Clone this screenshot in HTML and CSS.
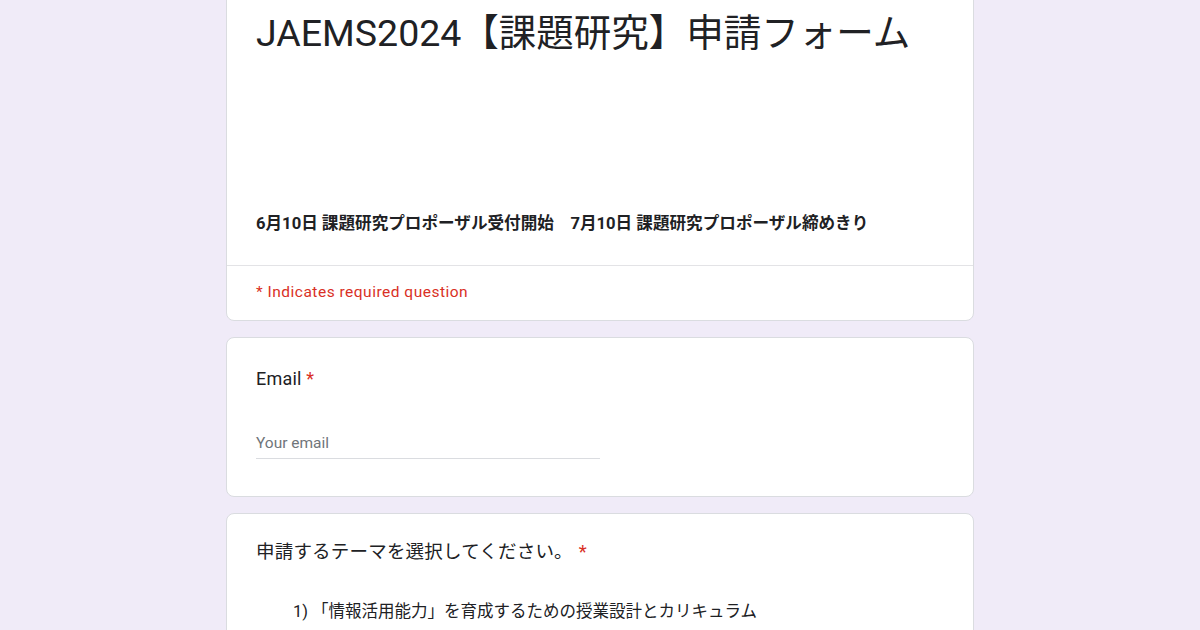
FILE: index.html
```html
<!DOCTYPE html>
<html lang="ja">
<head>
<meta charset="utf-8">
<link rel="stylesheet" href="styles.css">
</head>
<body>
<main class="form">
  <section class="card header-card">
    <div class="header-main">
      <h1 class="title">JAEMS2024【課題研究】申請フォーム</h1>
      <p class="desc">6月10日 課題研究プロポーザル受付開始　7月10日 課題研究プロポーザル締めきり</p>
    </div>
    <div class="required-note">* Indicates required question</div>
  </section>

  <section class="card question-card">
    <div class="q-title">Email <span class="req">*</span></div>
    <div class="input-line">Your email</div>
  </section>

  <section class="card question-card theme-card">
    <div class="q-title jp">申請するテーマを選択してください。<span class="req">*</span></div>
    <div class="option">1) 「情報活用能力」を育成するための授業設計とカリキュラム</div>
  </section>
</main>
</body>
</html>
```
FILE: styles.css
```css
html, body {
  margin: 0;
  padding: 0;
  background: #f0ebf8;
  height: 630px;
  overflow: hidden;
}
body {
  font-family: Roboto, "Noto Sans CJK JP", sans-serif;
  color: #202124;
}
.form {
  width: 748px;
  margin: 0 auto;
  display: flex;
  flex-direction: column;
  gap: 16px;
}
.card {
  background: #fff;
  border: 1px solid #dadce0;
  border-radius: 8px;
}
.header-card {
  margin-top: -20px;
}
.header-main {
  padding: 28px 29px 29px 29px;
  border-bottom: 1px solid #e3e3e6;
}
.title {
  margin: 0;
  font-size: 37.5px;
  font-weight: 400;
  line-height: 48px;
  letter-spacing: 0;
  color: #202124;
}
.desc {
  margin: 155px 0 0;
  font-size: 16.6px;
  font-weight: 700;
  line-height: 24px;
  color: #202124;
}
.required-note {
  padding: 16px 29px 18px;
  font-size: 15.5px;
  line-height: 20px;
  color: #d93025;
  letter-spacing: 0.5px;
}
.question-card {
  padding: 29px 29px 37px;
}
.q-title {
  font-size: 18px;
  line-height: 24px;
  letter-spacing: 0.2px;
}
.req {
  color: #d93025;
}
.q-title.jp .req {
  margin-left: 6px;
}
.input-line {
  width: 344px;
  margin-top: 42px;
  padding-bottom: 5px;
  border-bottom: 1px solid #dadce0;
  font-size: 15.5px;
  line-height: 20px;
  color: #70757a;
}
.theme-card {
  padding-top: 26px;
}
.q-title.jp {
  font-size: 18.5px;
}
.option {
  margin-top: 36px;
  padding-left: 37px;
  font-size: 16.5px;
  line-height: 24px;
}
```
